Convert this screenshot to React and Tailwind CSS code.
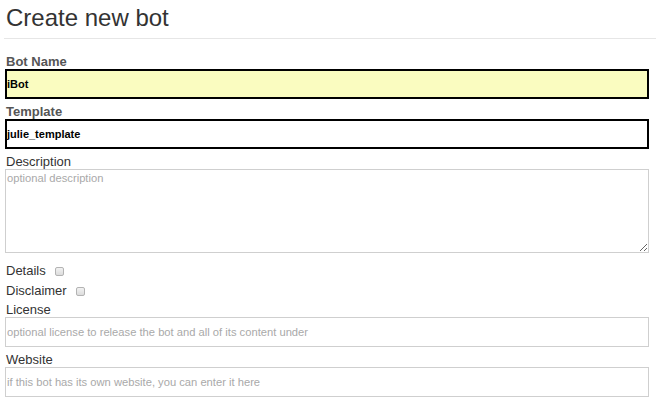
import React from "react";

function Label({ children, bold }) {
  return (
    <div
      className={
        "pl-[1px] text-[13px] leading-[15px] " +
        (bold ? "font-bold text-[#555]" : "text-[#333]")
      }
    >
      {children}
    </div>
  );
}

function Check({ label, className }) {
  return (
    <div className={"flex items-center pl-[1px] text-[13px] leading-[15px] text-[#333] " + className}>
      <span>{label}</span>
      <span className="ml-[9px] mt-[2px] inline-block h-[9px] w-[9px] rounded-[2px] border border-[#b3b3b3] bg-gradient-to-b from-[#f2f2f2] to-[#dcdcdc]" />
    </div>
  );
}

export default function App() {
  return (
    <div className="h-[402px] w-[656px] overflow-hidden bg-white font-['Liberation_Sans',Arial,sans-serif]">
      <h1 className="pl-[6px] pt-[4px] text-[24px] leading-[28px] font-normal text-[#333]">
        Create new bot
      </h1>
      <hr className="ml-[4px] mt-[6px] border-0 border-t border-[#e6e6e6]" />
      <div className="pl-[5px] pr-[7px] pt-[15px]">
        <Label bold>Bot Name</Label>
        <input
          readOnly
          value="iBot"
          className="block h-[30px] w-full border-2 border-black bg-[#fafcc0] px-0 text-[11px] font-bold text-black outline-none"
        />
        <div className="mt-[5px]">
          <Label bold>Template</Label>
        </div>
        <input
          readOnly
          value="julie_template"
          className="block h-[30px] w-full border-2 border-black bg-white px-0 text-[11px] font-bold text-black outline-none"
        />
        <div className="mt-[5px]">
          <Label>Description</Label>
        </div>
        <textarea
          placeholder="optional description"
          className="block h-[84px] w-full resize-y border border-[#cfcfcf] bg-white px-[1px] py-[2px] text-[11.2px] leading-[13px] text-black outline-none placeholder:text-[#a9a9a9]"
        />
        <Check label="Details" className="mt-[10px]" />
        <Check label="Disclaimer" className="mt-[5px]" />
        <div className="mt-[4px]">
          <Label>License</Label>
        </div>
        <input
          placeholder="optional license to release the bot and all of its content under"
          className="block h-[30px] w-full border border-[#cfcfcf] bg-white px-[1px] text-[11.2px] text-black outline-none placeholder:text-[#a9a9a9]"
        />
        <div className="mt-[5px]">
          <Label>Website</Label>
        </div>
        <input
          placeholder="if this bot has its own website, you can enter it here"
          className="block h-[30px] w-full border border-[#cfcfcf] bg-white px-[1px] text-[11.2px] text-black outline-none placeholder:text-[#a9a9a9]"
        />
      </div>
    </div>
  );
}
